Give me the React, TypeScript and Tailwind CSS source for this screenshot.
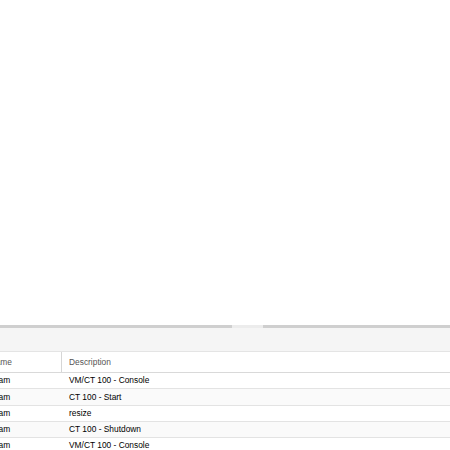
import React from 'react';

type TaskRow = {
  user: string;
  description: string;
};

const tasks: TaskRow[] = [
  { user: 'root@pam', description: 'VM/CT 100 - Console' },
  { user: 'root@pam', description: 'CT 100 - Start' },
  { user: 'root@pam', description: 'resize' },
  { user: 'root@pam', description: 'CT 100 - Shutdown' },
  { user: 'root@pam', description: 'VM/CT 100 - Console' },
];

export default function App() {
  return (
    <div className="flex h-[450px] w-[450px] flex-col overflow-hidden bg-white font-['Liberation_Sans',Arial,sans-serif] text-[8.4px]">
      {/* main content area */}
      <div className="h-[325px] shrink-0 bg-white" />

      {/* horizontal splitter with its handle */}
      <div className="flex h-[3px] shrink-0">
        <div className="w-[232px] bg-[#cfcfcf]" />
        <div className="w-[31px] bg-[#ececec]" />
        <div className="flex-1 bg-[#cfcfcf]" />
      </div>

      {/* task log panel */}
      <div className="flex min-h-0 flex-1 flex-col">
        <div className="h-[24px] shrink-0 border-b border-[#e4e4e4] bg-[#f5f5f5]" />

        <div className="min-h-0 flex-1 overflow-hidden">
          <div className="ml-[-36px]">
            {/* column header */}
            <div className="flex h-[21px] border-b border-[#d9d9d9] bg-white text-[#555]">
              <div className="flex w-[98px] shrink-0 items-center border-r border-[#d6d6d6] pl-[7px]">
                User name
              </div>
              <div className="flex flex-1 items-center pl-[7px]">Description</div>
            </div>

            {tasks.map((t, i) => (
              <div
                key={i}
                className={
                  'flex h-[16.25px] border-b border-[#e3e3e3] text-black ' +
                  (i % 2 === 1 ? 'bg-[#fafafa]' : 'bg-white')
                }
              >
                <div className="flex w-[98px] shrink-0 items-center pl-[7px]">{t.user}</div>
                <div className="flex flex-1 items-center pl-[7px]">{t.description}</div>
              </div>
            ))}
          </div>
        </div>
      </div>
    </div>
  );
}
